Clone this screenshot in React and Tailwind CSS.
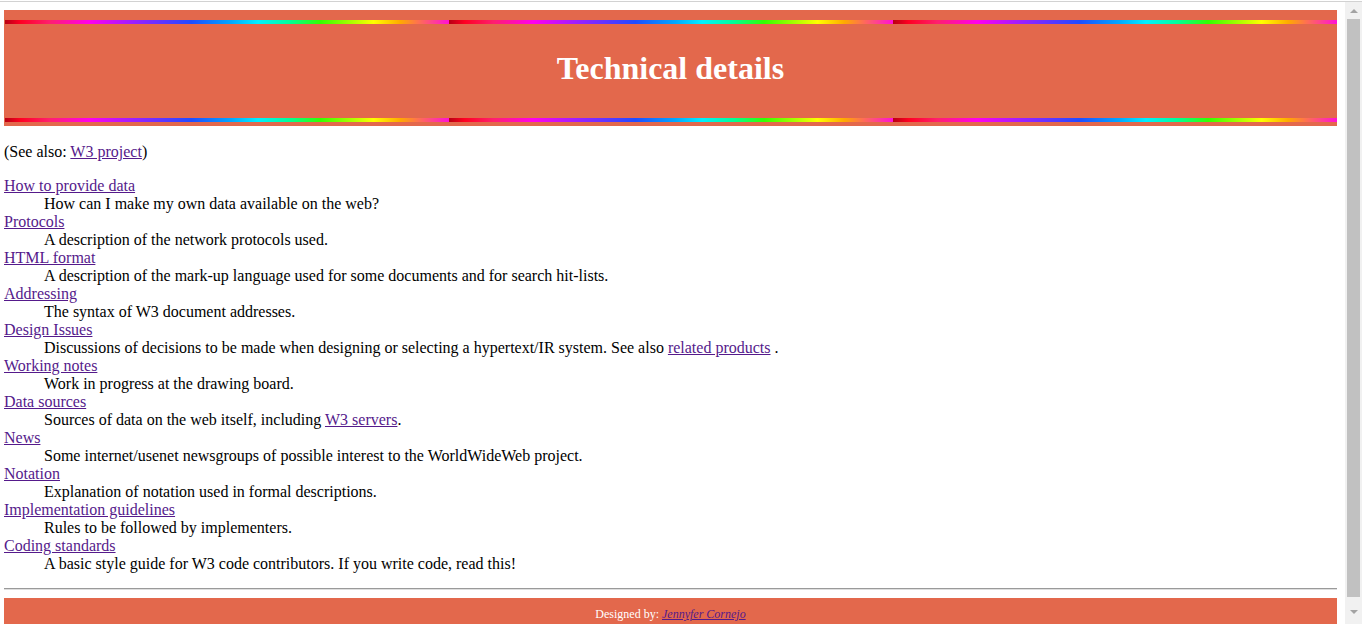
import React from 'react';

const rainbow =
  'h-[4px] ml-[1px] mr-0 bg-[linear-gradient(to_right,#b80012_0%,#ff0022_3.5%,#ff1f6e_10%,#ff00ee_19%,#9b1fff_29%,#1f4cff_42%,#00a8ff_51%,#00f0ff_57%,#00ff99_64%,#33ff00_71%,#aaff00_78%,#ffff00_83%,#ffaa00_89%,#ff5577_95%,#ff10d8_100%)] bg-[length:444px_4px] bg-repeat-x';

const items = [
  { title: 'How to provide data', desc: 'How can I make my own data available on the web?' },
  { title: 'Protocols', desc: 'A description of the network protocols used.' },
  {
    title: 'HTML format',
    desc: 'A description of the mark-up language used for some documents and for search hit-lists.',
  },
  { title: 'Addressing', desc: 'The syntax of W3 document addresses.' },
  {
    title: 'Design Issues',
    desc: (
      <>
        Discussions of decisions to be made when designing or selecting a hypertext/IR system. See also{' '}
        <a href="#" className="text-[#551a8b] underline">related products</a> .
      </>
    ),
  },
  { title: 'Working notes', desc: 'Work in progress at the drawing board.' },
  {
    title: 'Data sources',
    desc: (
      <>
        Sources of data on the web itself, including{' '}
        <a href="#" className="text-[#551a8b] underline">W3 servers</a>.
      </>
    ),
  },
  { title: 'News', desc: 'Some internet/usenet newsgroups of possible interest to the WorldWideWeb project.' },
  { title: 'Notation', desc: 'Explanation of notation used in formal descriptions.' },
  { title: 'Implementation guidelines', desc: 'Rules to be followed by implementers.' },
  {
    title: 'Coding standards',
    desc: 'A basic style guide for W3 code contributors. If you write code, read this!',
  },
];

const Scrollbar = () => (
  <div className="w-[17px] shrink-0 bg-[#f1f1f1] flex flex-col pt-[1px]">
    <div className="h-[16px] flex items-center justify-center">
      <div className="w-0 h-0 border-l-[4px] border-r-[4px] border-b-[4px] border-l-transparent border-r-transparent border-b-[#a3a3a3]" />
    </div>
    <div className="h-[578px] mx-[2px] bg-[#c1c1c1]" />
    <div className="flex-1 flex items-center justify-center pt-[2px]">
      <div className="w-0 h-0 border-l-[4px] border-r-[4px] border-t-[4px] border-l-transparent border-r-transparent border-t-[#a3a3a3]" />
    </div>
  </div>
);

const App = () => {
  return (
    <div
      className="w-[1362px] h-[624px] overflow-hidden bg-white flex flex-col text-black text-[16px]"
      style={{ fontFamily: '"Liberation Serif", "Times New Roman", serif' }}
    >
      <div className="h-[1px] bg-white" />
      <div className="h-[1px] bg-[#d2d2d2]" />
      <div className="flex-1 flex min-h-0">
        <main className="w-[1345px] pl-[4px] pr-[8px] pt-[8px]">
          <header className="bg-[#e3684c] pt-[10px] pb-[4px]">
            <div className={rainbow} />
            <div className="h-[94px] pt-[26px]">
              <h1 className="text-center text-white font-bold text-[32px] leading-[36px]">Technical details</h1>
            </div>
            <div className={rainbow} />
          </header>

          <p className="mt-[17px] leading-[18px]">
            (See also: <a href="#" className="text-[#551a8b] underline">W3 project</a>)
          </p>

          <dl className="mt-[16px] leading-[18px]">
            {items.map((item) => (
              <React.Fragment key={item.title}>
                <dt>
                  <a href="#" className="text-[#551a8b] underline">{item.title}</a>
                </dt>
                <dd className="ml-[40px]">{item.desc}</dd>
              </React.Fragment>
            ))}
          </dl>

          <hr className="mt-[15px] mb-[8px] h-[2px] border-0 border-t border-b border-t-[#9a9a9a] border-b-[#dedede]" />

          <footer className="bg-[#e3684c] h-[40px] pt-[9px] text-center text-white text-[12px] leading-[14px]">
            Designed by: <a href="#" className="italic text-[#551a8b] underline">Jennyfer Cornejo</a>
          </footer>
        </main>
        <Scrollbar />
      </div>
    </div>
  );
};

export default App;
